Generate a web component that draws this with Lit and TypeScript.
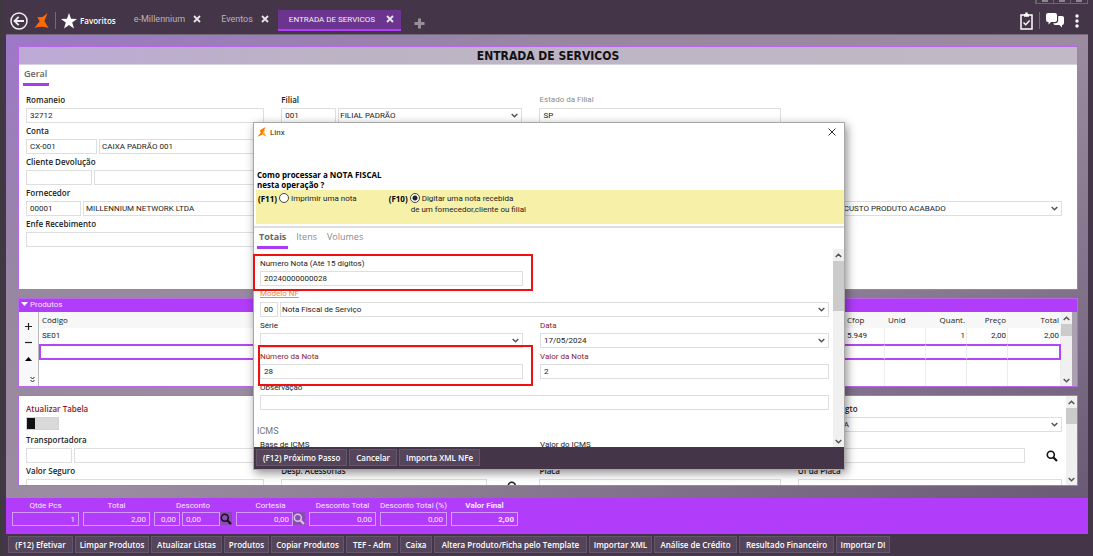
import { LitElement, html, svg, css, nothing } from "lit";
import { customElement } from "lit/decorators.js";
import { classMap } from "lit/directives/class-map.js";
import { styleMap } from "lit/directives/style-map.js";

const fieldStyles = css`
  * { box-sizing: border-box; }
  button, input, select { font: inherit; color: inherit; margin: 0; border-radius: 0; }
  button { padding: 0; border: 0; background: none; cursor: pointer; }
  svg { display: block; }
  .field { display: flex; flex-direction: column; min-width: 0; color: #222; }
  .field label { font-size: 8px; line-height: 16px; height: 16px; font-weight: 600; white-space: nowrap; align-self: flex-start; }
  .muted label { color: #8c8c8c; font-weight: 400; font-family: Roboto, sans-serif; }
  .required label { color: #8b1a2b; }
  .inputs { display: flex; gap: 2px; }
  .box { height: 15px; min-width: 0; flex: 1; border: 1px solid #dedede; background: #fff; padding: 0 3px; font-family: Roboto, sans-serif; font-size: 8px; line-height: 13px; outline: none; appearance: none; width: 100%; }
  .code { flex: none; }
  .code + .box { padding-left: 2px; }
  .w18 { width: 18px; } .w42 { width: 42px; } .w46 { width: 46px; } .w55 { width: 55px; } .w66 { width: 66px; } .w72 { width: 71px; }
  .pick { display: grid; flex: 1; min-width: 0; align-items: center; }
  .pick > * { grid-area: 1 / 1; }
  .code + .pick select { padding-left: 1px; }
  .pick svg { justify-self: end; margin-right: 4px; pointer-events: none; }
`;

const chevron = (up = false) => svg`<svg width="7" height="5" viewBox="0 0 7 5" fill="none" stroke="#555" stroke-width="1.5"><path d=${up ? "M.7 4 3.5 1.2 6.3 4" : "M.7 1 3.5 3.8 6.3 1"}/></svg>`;
const cross = html`<svg width="8" height="8" viewBox="0 0 8 8" stroke="#e8e4ea" stroke-width="1.8"><path d="M1 1 7 7M7 1 1 7"/></svg>`;
const lens = (color: string) => html`<svg width="12" height="12" viewBox="0 0 12 12" fill="none" stroke=${color}><circle cx="4.8" cy="4.8" r="3.5" stroke-width="1.6"/><path d="M7.5 7.5 11 11" stroke-width="2.2"/></svg>`;
const brand = (size: number) => html`<svg width=${size} height=${size} viewBox="0 0 15 16"><path fill="#ff6a00" d="M14 0 8.6 4.2 3 4.6 5.600 8.800 0 16Q7 13.200 15 16L10.600 8.600Z"/></svg>`;
const brandSmall = html`<svg width="10" height="10" viewBox="0 0 15 16"><path fill="#ff7a00" d="M13 0 4 5 5.500 9 0 15.500 8 12.500Z"/><path fill="#ffae1a" d="M13 0 8 12.500 15 15.500 11 8.500Z"/></svg>`;

interface Field {
  id: string;
  label: string;
  value?: string;
  code?: string;
  codeWidth?: string;
  select?: boolean;
  tone?: string;
}

const field = (f: Field) => html`
  <div class="field ${f.tone ?? ""}">
    <label for=${f.id}>${f.label}</label>
    <div class="inputs">
      ${f.codeWidth ? html`<input class="box code ${f.codeWidth}" aria-label="Código ${f.label}" .value=${f.code ?? ""}>` : nothing}
      ${f.select
        ? html`<span class="pick"><select class="box" id=${f.id}><option>${f.value ?? ""}</option></select>${chevron()}</span>`
        : html`<input class="box" id=${f.id} .value=${f.value ?? ""}>`}
    </div>
  </div>`;

@customElement("scroll-track")
export class ScrollTrack extends LitElement {
  static properties = { thumb: { type: Number } };
  declare thumb: number;
  static styles = css`
    :host { display: flex; flex-direction: column; align-items: center; width: 11px; flex: none; background: #f0f0f0; }
    .cap { height: 12px; display: flex; align-items: center; flex: none; }
    .thumb { width: 100%; background: #cbcbcb; }
    .rest { flex: 1; }
    svg { display: block; }
  `;
  render() {
    return html`<span class="cap">${chevron(true)}</span>
      <span class="thumb" style=${styleMap({ height: `${this.thumb}px` })}></span>
      <span class="rest"></span>
      <span class="cap">${chevron()}</span>`;
  }
}

@customElement("app-header")
export class AppHeader extends LitElement {
  static styles = css`
    * { box-sizing: border-box; }
    :host { display: flex; align-items: flex-start; height: 34px; padding: 10px 10px 0 10px; color: #fff; position: relative; }
    button { font: inherit; color: inherit; background: none; border: 0; padding: 0; display: flex; align-items: center; }
    svg { display: block; }
    nav, .tools { display: flex; align-items: center; height: 21px; }
    .logo { margin-left: 6px; }
    .rule { width: 1px; height: 17px; background: #75697a; }
    .favs { gap: 3px; font-size: 8px; font-weight: 600; margin-left: 5px; }
    .left .rule { margin-left: 6px; }
    .tabs { margin-left: 7px; font-family: Roboto, sans-serif; }
    .tab { display: flex; align-items: center; justify-content: space-between; height: 21px; padding: 0 9px 1px 11px; font-size: 9px; color: #b9b2bd; border-bottom: 2px solid transparent; gap: 8px; }
    .tab.active { background: #6b358f; border-bottom-color: #b03dfa; color: #f3ecf7; font-size: 8px; gap: 11px; padding-right: 7px; }
    .plus { margin: 8px 0 0 13px; }
    .tools { margin-left: auto; gap: 6px; }
    .tools .menu { margin-left: 1px; }
    .frame { position: absolute; top: 0; right: 5px; display: flex; border: 1px solid #6c6470; border-top: 0; height: 4px; }
    .frame span { width: 17px; border-left: 1px solid #6c6470; display: flex; justify-content: center; }
    .frame i { width: 6px; height: 2px; background: #8c8590; }
  `;
  tabs = [
    { name: "e-Millennium", active: false },
    { name: "Eventos", active: false },
    { name: "ENTRADA DE SERVICOS", active: true },
  ];
  render() {
    return html`
      <div class="frame"><span><i></i></span><span><i></i></span><span><i></i></span></div>
      <nav class="left">
        <button aria-label="Voltar"><svg width="18" height="18" viewBox="0 0 18 18" fill="none" stroke="#eee" stroke-width="1.5"><circle cx="9" cy="9" r="8"/><path d="M14 9H5M8.7 4.8 4.5 9l4.2 4.2" stroke-width="1.8"/></svg></button>
        <span class="logo">${brand(15)}</span>
        <span class="rule"></span>
        <button class="favs"><svg width="16" height="16" viewBox="0 0 16 16" fill="#fff"><path d="M8 0 10 5.8 16 5.9 11.2 9.6 13 15.6 8 12 3 15.6 4.8 9.6 0 5.9 6 5.8Z"/></svg>Favoritos</button>
      </nav>
      <nav class="tabs">
        ${this.tabs.map((t) => html`<div class=${classMap({ tab: true, active: t.active })}><span>${t.name}</span><button aria-label="Fechar ${t.name}">${cross}</button></div>`)}
      </nav>
      <button class="plus" aria-label="Nova aba"><svg width="11" height="11" viewBox="0 0 11 11" stroke="#97909a" stroke-width="3"><path d="M5.500 .5V10.500M.5 5.500H10.500"/></svg></button>
      <div class="tools">
        <button aria-label="Tarefas"><svg width="13" height="18" viewBox="0 0 13 18" fill="none" stroke="#fff" stroke-width="1.500"><rect x="1" y="3" width="11" height="14"/><path d="M4 3.500H9M6.500 .5V3" stroke-width="2.400"/><path d="M3.500 10.500 5.700 12.700 9.600 8.500" stroke-width="1.300"/></svg></button>
        <span class="rule"></span>
        <button aria-label="Conversas"><svg width="18" height="15" viewBox="0 0 18 15" fill="#fff"><path d="M2 0H9Q11 0 11 2V7Q11 9 9 9H5L2.500 11.500V9H2Q0 9 0 7V2Q0 0 2 0Z"/><path d="M12.200 3H16Q18 3 18 5V10Q18 12 16 12V14.500L13.500 12H9Q7.500 12 7.300 10.200H9.500Q12.200 10 12.200 7Z"/></svg></button>
        <button class="menu" aria-label="Menu"><svg width="12" height="14" viewBox="0 0 12 14" fill="#fff"><circle cx="6" cy="2" r="1.700"/><circle cx="6" cy="7" r="1.700"/><circle cx="6" cy="12" r="1.700"/></svg></button>
      </div>`;
  }
}

@customElement("general-panel")
export class GeneralPanel extends LitElement {
  static styles = [fieldStyles, css`
    :host { display: flex; flex-direction: column; height: 244px; background: #fff; border: 1px solid #b866ea; }
    h1 { margin: 0; height: 18px; line-height: 18px; font-family: "DejaVu Sans Condensed", "Open Sans", sans-serif; font-size: 12px; font-weight: 700; text-align: center; color: #111; background: linear-gradient(90deg, #bda9d6, #bcb3c4 30%, #c2b9c6); border-bottom: 1px solid #d8d2dc; }
    .tab { align-self: flex-start; margin: 0 0 0 4px; padding: 0 2px 0 1px; height: 21px; line-height: 18px; font-size: 9px; font-weight: 600; color: #666; border-bottom: 3px solid #a93cf3; }
    .columns { display: grid; grid-template-columns: 238fr 241fr 241fr 264fr; gap: 17px; padding: 6px 15px 0 7px; }
    .custo { padding-top: 93px; }
  `];
  left: Field[] = [
    { id: "romaneio", label: "Romaneio", value: "32712" },
    { id: "conta", label: "Conta", code: "CX-001", codeWidth: "w72", value: "CAIXA PADRÃO 001" },
    { id: "cliente", label: "Cliente Devolução", codeWidth: "w66" },
    { id: "fornecedor", label: "Fornecedor", code: "00001", codeWidth: "w55", value: "MILLENNIUM NETWORK LTDA" },
    { id: "enfe", label: "Enfe Recebimento" },
  ];
  render() {
    return html`
      <h1>ENTRADA DE SERVICOS</h1>
      <button class="tab">Geral</button>
      <div class="columns">
        <div>${this.left.map(field)}</div>
        <div>${field({ id: "filial", label: "Filial", code: "001", codeWidth: "w55", value: "FILIAL PADRÃO", select: true })}</div>
        <div>${field({ id: "estado", label: "Estado da Filial", value: "SP", tone: "muted" })}</div>
        <div class="custo">${field({ id: "custo", label: "Custo", codeWidth: "w42", value: "CUSTO PRODUTO ACABADO", select: true })}</div>
      </div>`;
  }
}

@customElement("products-panel")
export class ProductsPanel extends LitElement {
  static styles = css`
    * { box-sizing: border-box; }
    :host { display: flex; flex-direction: column; height: 89px; border: 1px solid #b866ea; background: #fff; color: #222; font-size: 8px; }
    h2 { margin: 0; height: 13px; padding: 0 0 3px 2px; display: flex; align-items: center; gap: 2px; background: #b13dfb; color: #f4e6ff; font-family: Roboto, sans-serif; font-size: 8px; font-weight: 400; flex: none; }
    svg { display: block; }
    .body { display: flex; flex: 1; min-height: 0; overflow: hidden; }
    .tools { width: 20px; flex: none; display: flex; flex-direction: column; align-items: center; background: #f8f8f8; border-right: 1px solid #bbb; padding-top: 11px; gap: 9px; }
    button { padding: 0; border: 0; background: none; height: 7px; display: flex; align-items: center; }
    .end { margin: 5px 0 0 8px; }
    table { flex: 1; border-collapse: separate; border-spacing: 0; table-layout: fixed; min-width: 0; }
    .cfop, .unid, .quant, .preco { width: 41px; }
    .total { width: 53px; }
    th, td { padding: 0 2px 0 3px; height: 16px; line-height: 14px; text-align: left; border-right: 1px solid #ededed; font-weight: 400; white-space: nowrap; font-family: Roboto, sans-serif; }
    th { background: #f7f7f7; border-right-color: #f7f7f7; font-family: "Open Sans", sans-serif; }
    .num { text-align: right; padding-right: 1px; }
    .selected td { border-top: 2px solid #b546f5; border-bottom: 2px solid #b546f5; }
    .selected td:first-child { border-left: 2px solid #b546f5; }
    .selected td:last-child { border-right: 2px solid #b546f5; }
    .last td { height: 28px; }
    .edge { width: 5px; background: #aaa1b0; flex: none; }
  `;
  render() {
    return html`
      <h2><svg width="7" height="4" viewBox="0 0 7 4" fill="#fff"><path d="M0 0H7L3.500 4Z"/></svg>Produtos</h2>
      <div class="body">
        <div class="tools">
          <button aria-label="Adicionar"><svg width="7" height="7" viewBox="0 0 7 7" stroke="#222" stroke-width="1.200"><path d="M3.500 0V7M0 3.500H7"/></svg></button>
          <button aria-label="Remover"><svg width="7" height="7" viewBox="0 0 7 7" stroke="#222" stroke-width="1.200"><path d="M0 3.500H7"/></svg></button>
          <button aria-label="Subir"><svg width="7" height="4" viewBox="0 0 7 4"><path d="M0 4 3.500 0 7 4Z"/></svg></button>
          <button class="end" aria-label="Fim"><svg width="5" height="7" viewBox="0 0 5 7" fill="none" stroke="#222"><path d="M.5 1 2.500 3 4.500 1M.5 4 2.500 6 4.500 4"/></svg></button>
        </div>
        <table>
          <colgroup><col><col class="cfop"><col class="unid"><col class="quant"><col class="preco"><col class="total"></colgroup>
          <thead><tr><th>Código</th><th>Cfop</th><th>Unid</th><th class="num">Quant.</th><th class="num">Preço</th><th class="num">Total</th></tr></thead>
          <tbody>
            <tr><td>SE01</td><td>5.949</td><td></td><td class="num">1</td><td class="num">2,00</td><td class="num">2,00</td></tr>
            <tr class="selected"><td></td><td></td><td></td><td></td><td></td><td></td></tr>
            <tr class="last"><td></td><td></td><td></td><td></td><td></td><td></td></tr>
          </tbody>
        </table>
        <scroll-track .thumb=${12}></scroll-track>
        <span class="edge"></span>
      </div>`;
  }
}

@customElement("shipping-panel")
export class ShippingPanel extends LitElement {
  static styles = [fieldStyles, css`
    :host { display: flex; height: 91px; border: 1px solid #b866ea; background: #fff; }
    .columns { flex: 1; min-width: 0; height: 89px; display: grid; grid-template-columns: 238fr 241fr 241fr 264fr; gap: 17px; padding: 5px 4px 0 7px; overflow: hidden; }
    .toggle { appearance: none; display: block; width: 33px; height: 13px; margin: 0 0 2px; background: linear-gradient(90deg, #111 8px, #d9d9d9 8px); border: 1px solid #d2d2d2; outline: none; }
    .blank { height: 62px; }
    .search { display: grid; grid-template-columns: 1fr 37px; align-items: end; }
    .search.wide { grid-template-columns: 1fr 35px; }
    .search button { height: 15px; display: grid; place-items: center; padding-left: 16px; }
  `];
  render() {
    return html`
      <div class="columns">
        <div>
          <div class="field required"><label for="atualizar">Atualizar Tabela</label><input class="toggle" id="atualizar" type="checkbox"></div>
          ${field({ id: "transportadora", label: "Transportadora", codeWidth: "w46" })}
          ${field({ id: "seguro", label: "Valor Seguro" })}
        </div>
        <div>
          <div class="blank"></div>
          <div class="search wide">${field({ id: "despesas", label: "Desp. Acessorias" })}<button aria-label="Buscar despesas">${lens("#222")}</button></div>
        </div>
        <div>
          <div class="blank"></div>
          ${field({ id: "placa", label: "Placa" })}
        </div>
        <div>
          ${field({ id: "pagto", label: "Condição Pagto", codeWidth: "w42", value: "A", select: true })}
          <div class="search">${field({ id: "redespacho", label: "Redespacho" })}<button aria-label="Buscar">${lens("#111")}</button></div>
          ${field({ id: "uf", label: "Uf da Placa" })}
        </div>
      </div>
      <scroll-track .thumb=${16}></scroll-track>`;
  }
}

@customElement("totals-bar")
export class TotalsBar extends LitElement {
  static styles = css`
    * { box-sizing: border-box; }
    :host { display: flex; align-items: flex-end; gap: 4px; height: 36px; padding: 0 6px 8px; background: #b13dfb; color: #f6e9ff; font-family: Roboto, sans-serif; font-size: 8px; }
    .total { display: flex; flex-direction: column; align-items: center; }
    label { line-height: 13px; white-space: nowrap; }
    input { font: inherit; color: inherit; width: 67px; height: 14px; margin: 0; padding: 0 3px; text-align: right; background: transparent; border: 1px solid #d59bfc; border-radius: 0; outline: none; }
    .bold { font-weight: 700; }
    .row { display: flex; align-self: flex-start; }
    .row .pct { width: 26px; margin-right: 2px; } .row .off { width: 38px; text-align: left; } .row .court { width: 57px; }
    .row button { border: 0; padding: 0; width: 12px; height: 13px; display: grid; place-items: center; background: #8a4bb5; }
    svg { display: block; }
  `;
  render() {
    return html`
      <div class="total"><label for="qt">Qtde Pcs</label><input id="qt" .value=${"1"}></div>
      <div class="total"><label for="tt">Total</label><input id="tt" .value=${"2,00"}></div>
      <div class="total"><label for="ds">Desconto</label><span class="row"><input class="pct" aria-label="Desconto (%)" .value=${"0,00"}><input class="off" id="ds" .value=${"0,00"}><button aria-label="Buscar desconto">${lens("#1c1022")}</button></span></div>
      <div class="total"><label for="co">Cortesia</label><span class="row"><input class="court" id="co" .value=${"0,00"}><button aria-label="Desfazer cortesia">${lens("#d7c3e2")}</button></span></div>
      <div class="total"><label for="dt">Desconto Total</label><input id="dt" .value=${"0,00"}></div>
      <div class="total"><label for="dp">Desconto Total (%)</label><input id="dp" .value=${"0,00"}></div>
      <div class="total bold"><label for="vf">Valor Final</label><input id="vf" .value=${"2,00"}></div>`;
  }
}

@customElement("invoice-dialog")
export class InvoiceDialog extends LitElement {
  static styles = [fieldStyles, css`
    :host { display: flex; flex-direction: column; width: 592px; height: 348px; background: #fff; border: 1px solid #a8a8a8; box-shadow: 2px 3px 9px rgb(0 0 0 / 45%); color: #222; font-family: Roboto, sans-serif; font-size: 8px; }
    .field label { font-weight: 400; line-height: 18px; }
    .title { display: flex; align-items: center; height: 18px; padding: 0 8px 0 3px; gap: 3px; flex: none; }
    .title button { margin-left: auto; }
    h2 { margin: 29px 0 0 3px; font-family: "Open Sans", sans-serif; font-size: 8px; line-height: 10px; font-weight: 700; color: #000; flex: none; }
    .options { display: flex; gap: 32px; margin: 0 0 2px 2px; height: 34px; padding: 3px 2px; background: #f7f0a9; flex: none; }
    .option { display: flex; gap: 2px; align-items: flex-start; line-height: 11px; }
    .option b { font-family: "Open Sans", sans-serif; color: #000; }
    .option .more { display: block; margin-left: -11px; }
    input[type="radio"] { appearance: none; width: 10px; height: 10px; border: 1px solid #444; border-radius: 50%; background: #fff; margin: 0; flex: none; }
    input[type="radio"]:checked { background: radial-gradient(circle, #222 0 2px, #fff 3px); }
    .tabs { display: flex; gap: 6px; padding-left: 3px; height: 23px; border-top: 2px solid #dedede; font-size: 9px; color: #8a8a8a; flex: none; font-family: "Open Sans", sans-serif; }
    .tabs button { padding: 0 2px; border-bottom: 3px solid transparent; line-height: 16px; }
    .tabs .active { font-weight: 700; color: #666; border-bottom-color: #a93cf3; }
    .body { display: flex; flex: 1; min-height: 0; }
    .form { flex: 1; min-width: 0; height: 198px; overflow: hidden; padding: 6px 4px 0 6px; display: grid; grid-template-columns: 263fr 289fr; column-gap: 17px; align-content: start; }
    .full { grid-column: 1 / 3; }
    a { color: #f08a3c; font-size: 8px; line-height: 16px; }
    .modelo { display: flex; flex-direction: column; align-items: flex-start; }
    .modelo .inputs { align-self: stretch; }
    h3 { grid-column: 1 / 3; margin: 13px 0 0 -3px; font-size: 9px; line-height: 16px; height: 13px; font-weight: 400; color: #777; }
    footer { height: 22px; background: #443648; display: flex; gap: 2px; padding: 2px 2px 3px; flex: none; font-family: "Open Sans", sans-serif; }
    footer button { background: #54455a; border: 1px solid #65576b; color: #fff; font-weight: 600; padding: 0 6px; }
    .mark { position: absolute; border: 2px solid #f01010; pointer-events: none; }
    .first { left: -1px; top: 131px; width: 280px; height: 37px; }
    .second { left: 4px; top: 222px; width: 275px; height: 41px; }
  `];
  render() {
    return html`
      <div class="title">${brandSmall}<span>Linx</span><button aria-label="Fechar"><svg width="8" height="8" viewBox="0 0 8 8" stroke="#333"><path d="M.5 .5 7.500 7.500M7.500 .5 .5 7.500"/></svg></button></div>
      <h2>Como processar a NOTA FISCAL<br>nesta operação ?</h2>
      <div class="options">
        <label class="option"><b>(F11)</b><input type="radio" name="modo"><span>Imprimir uma nota</span></label>
        <label class="option"><b>(F10)</b><input type="radio" name="modo" checked><span>Digitar uma nota recebida<span class="more">de um fornecedor,cliente ou filial</span></span></label>
      </div>
      <div class="tabs"><button class="active">Totais</button><button>Itens</button><button>Volumes</button></div>
      <div class="body">
        <div class="form">
          ${field({ id: "numero", label: "Numero Nota (Até 15 dígitos)", value: "20240000000028" })}<span></span>
          <div class="full modelo"><a href="#modelo">Modelo NF</a>
            <div class="inputs"><input class="box code w18" aria-label="Código do modelo" .value=${"00"}><span class="pick"><select class="box" aria-label="Modelo NF"><option>Nota Fiscal de Serviço</option></select>${chevron()}</span></div>
          </div>
          ${field({ id: "serie", label: "Série", select: true })}
          ${field({ id: "data", label: "Data", value: "17/05/2024", select: true, tone: "required" })}
          ${field({ id: "nota", label: "Número da Nota", value: "28", tone: "required" })}
          ${field({ id: "valor", label: "Valor da Nota", value: "2", tone: "required" })}
          <div class="full">${field({ id: "obs", label: "Observação" })}</div>
          <h3>ICMS</h3>
          ${field({ id: "base", label: "Base de ICMS" })}
          ${field({ id: "icms", label: "Valor do ICMS" })}
        </div>
        <scroll-track .thumb=${50}></scroll-track>
      </div>
      <footer><button>(F12) Próximo Passo</button><button>Cancelar</button><button>Importa XML NFe</button></footer>
      <span class="mark first"></span><span class="mark second"></span>`;
  }
}

@customElement("app-root")
export class AppRoot extends LitElement {
  static styles = css`
    * { box-sizing: border-box; }
    :host { display: flex; flex-direction: column; min-height: 100vh; position: relative; overflow: hidden; background: #443648; border-left: 2px solid #3b3b3b; font-family: "Open Sans", "Noto Sans", sans-serif; font-size: 8px; }
    app-header { margin-left: -2px; }
    main { margin: 0 5px 0 4px; border-top: 1px solid #75677c; padding: 11px 10px 12px 12px; display: flex; flex-direction: column; gap: 8px; background: linear-gradient(155deg, #9d78c8 0%, #97889f 28%, #9b8ca2 52%, #6b5a75 100%); }
    totals-bar { margin: 0 5px 0 4px; }
    .actions { display: flex; gap: 2px; padding: 2px 6px 3px; }
    .actions button { height: 17px; padding: 0; font: inherit; font-weight: 600; color: #fff; background: #54455a; border: 1px solid #65576b; white-space: nowrap; }
    invoice-dialog { position: absolute; left: 251px; top: 122px; }
  `;
  actions = [
    { label: "(F12) Efetivar", width: 65 },
    { label: "Limpar Produtos", width: 74 },
    { label: "Atualizar Listas", width: 71 },
    { label: "Produtos", width: 45 },
    { label: "Copiar Produtos", width: 73 },
    { label: "TEF - Adm", width: 52 },
    { label: "Caixa", width: 32 },
    { label: "Altera Produto/Ficha pelo Template", width: 153 },
    { label: "Importar XML", width: 63 },
    { label: "Análise de Crédito", width: 83 },
    { label: "Resultado Financeiro", width: 95 },
    { label: "Importar DI", width: 54 },
  ];
  render() {
    return html`
      <app-header></app-header>
      <main>
        <general-panel></general-panel>
        <products-panel></products-panel>
        <shipping-panel></shipping-panel>
      </main>
      <totals-bar></totals-bar>
      <div class="actions">${this.actions.map((a) => html`<button style=${styleMap({ width: `${a.width}px` })}>${a.label}</button>`)}</div>
      <invoice-dialog></invoice-dialog>`;
  }
}
